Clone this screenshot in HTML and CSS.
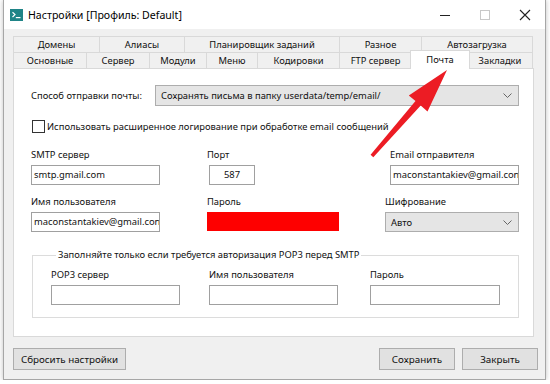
FILE: index.html
```html
<!DOCTYPE html>
<html lang="ru">
<head>
    <meta charset="UTF-8">
    <meta name="viewport" content="width=device-width, initial-scale=1.0">
    <title>Настройки</title>
    <link rel="stylesheet" href="styles.css">
</head>
<body>
    <div class="window">
        <div class="titlebar">
            <svg class="app-icon" width="13" height="12" viewBox="0 0 13 12">
                <rect width="13" height="12" fill="#1f8487"/>
                <path d="M2.5 3.2 L5 5.6 L2.5 8" stroke="#fff" stroke-width="1.2" fill="none"/>
                <path d="M5.8 8.6 H10.5" stroke="#fff" stroke-width="1.2"/>
            </svg>
            <span class="title">Настройки [Профиль: Default]</span>
            <div class="controls">
                <div class="ctl">
                    <svg width="12" height="12" viewBox="0 0 12 12"><path d="M1 6.5 H11" stroke="#222" stroke-width="1"/></svg>
                </div>
                <div class="ctl">
                    <svg width="12" height="12" viewBox="0 0 12 12"><rect x="1.5" y="1.5" width="9" height="9" fill="none" stroke="#c8c8c8" stroke-width="1"/></svg>
                </div>
                <div class="ctl">
                    <svg width="12" height="12" viewBox="0 0 12 12"><path d="M1 1 L11 11 M11 1 L1 11" stroke="#222" stroke-width="1.1"/></svg>
                </div>
            </div>
        </div>

        <div class="content">
            <div class="tabs">
                <div class="tab-row row-back">
                    <div class="tab">Домены</div>
                    <div class="tab">Алиасы</div>
                    <div class="tab">Планировщик заданий</div>
                    <div class="tab">Разное</div>
                    <div class="tab">Автозагрузка</div>
                </div>
                <div class="tab-row row-front">
                    <div class="tab">Основные</div>
                    <div class="tab">Сервер</div>
                    <div class="tab">Модули</div>
                    <div class="tab">Меню</div>
                    <div class="tab">Кодировки</div>
                    <div class="tab">FTP сервер</div>
                    <div class="tab active">Почта</div>
                    <div class="tab">Закладки</div>
                </div>
            </div>

            <div class="panel">
                <div class="send-row">
                    <span>Способ отправки почты:</span>
                    <div class="select select-wide">
                        <span>Сохранять письма в папку userdata/temp/email/</span>
                        <svg class="chevron" width="9" height="5" viewBox="0 0 9 5"><path d="M0.5 0.5 L4.5 4.5 L8.5 0.5" stroke="#666" fill="none"/></svg>
                    </div>
                </div>

                <div class="check-row">
                    <span class="checkbox"></span>
                    <span>Использовать расширенное логирование при обработке email сообщений</span>
                </div>

                <div class="fields">
                    <div class="field w-129">
                        <div class="label">SMTP сервер</div>
                        <div class="input">smtp.gmail.com</div>
                    </div>
                    <div class="field f-port">
                        <div class="label">Порт</div>
                        <div class="input port">587</div>
                    </div>
                    <div class="field f-right w-129">
                        <div class="label">Email отправителя</div>
                        <div class="input">maconstantakiev@gmail.con</div>
                    </div>
                </div>

                <div class="fields second">
                    <div class="field w-129">
                        <div class="label">Имя пользователя</div>
                        <div class="input">maconstantakiev@gmail.con</div>
                    </div>
                    <div class="field f-pass">
                        <div class="label">Пароль</div>
                        <div class="redact"></div>
                    </div>
                    <div class="field f-right f-enc">
                        <div class="label">Шифрование</div>
                        <div class="select">
                            <span>Авто</span>
                            <svg class="chevron" width="9" height="5" viewBox="0 0 9 5"><path d="M0.5 0.5 L4.5 4.5 L8.5 0.5" stroke="#666" fill="none"/></svg>
                        </div>
                    </div>
                </div>

                <fieldset class="group">
                    <legend>Заполняйте только если требуется авторизация POP3 перед SMTP</legend>
                    <div class="group-fields">
                        <div class="field w-129">
                            <div class="label">POP3 сервер</div>
                            <div class="input"></div>
                        </div>
                        <div class="field w-129">
                            <div class="label">Имя пользователя</div>
                            <div class="input"></div>
                        </div>
                        <div class="field w-130">
                            <div class="label">Пароль</div>
                            <div class="input"></div>
                        </div>
                    </div>
                </fieldset>
            </div>

            <div class="footer">
                <button class="btn btn-reset">Сбросить настройки</button>
                <div class="footer-right">
                    <button class="btn btn-save">Сохранить</button>
                    <button class="btn btn-close">Закрыть</button>
                </div>
            </div>
        </div>
    </div>

    <!-- red pointer drawn over the dialog -->
    <svg class="arrow" width="550" height="384" viewBox="0 0 550 384">
        <polygon points="447,70 427.5,111.5 420.7,105.5 373.3,157.2 370.6,154.8 415.5,100.9 408.8,95.5" fill="#ec1c24"/>
    </svg>
</body>
</html>
```

FILE: styles.css
```css
body {
    margin: 0;
    background: #ffffff;
    font-family: "Noto Sans", sans-serif;
    font-size: 9.4px;
    color: #111;
}
.window {
    margin-left: 3px;
    width: 541px;
    height: 379px;
    border: 1px solid #a6a6a6;
    border-top: none;
    background: #f0f0f0;
    box-shadow: 0 0 5px rgba(0, 0, 0, 0.25);
}
.titlebar {
    height: 29px;
    background: #ffffff;
    display: flex;
    align-items: center;
}
.app-icon {
    margin-left: 6px;
}
.title {
    margin-left: 5px;
    font-size: 10.6px;
    color: #000;
}
.controls {
    margin-left: auto;
    display: flex;
    height: 100%;
}
.ctl {
    width: 40px;
    display: flex;
    align-items: center;
    justify-content: center;
}
.content {
    padding: 7px 0 0 9px;
}
.tab-row {
    display: grid;
    height: 16px;
    width: 520px;
}
.row-back {
    grid-template-columns: 87px 85px 155px 82px 111px;
}
.row-front {
    grid-template-columns: 74px 63px 57px 51px 82px 72px 56px 65px;
}
.tab {
    border: 1px solid #d9d9d9;
    border-bottom: none;
    margin-left: -1px;
    background: #f0f0f0;
    text-align: center;
    line-height: 15px;
    white-space: nowrap;
}
.tab:first-child {
    margin-left: 0;
}
.tab.active {
    position: relative;
    z-index: 1;
    background: #ffffff;
    margin: -2px -2px -1px -2px;
    line-height: 17px;
}
.panel {
    width: 521px;
    height: 269px;
    box-sizing: border-box;
    background: #ffffff;
    border: 1px solid #d9d9d9;
    padding: 0 14px 0 17px;
}
.send-row {
    display: flex;
    align-items: center;
    margin-top: 16px;
}
.select {
    height: 20px;
    box-sizing: border-box;
    background: #e5e5e5;
    border: 1px solid #adadad;
    padding-left: 5px;
    display: flex;
    align-items: center;
}
.select-wide {
    margin-left: auto;
    width: 364px;
    height: 21px;
}
.chevron {
    margin-left: auto;
    margin-right: 6px;
}
.check-row {
    display: flex;
    align-items: center;
    margin-top: 14px;
    height: 13px;
}
.checkbox {
    width: 13px;
    height: 13px;
    box-sizing: border-box;
    border: 1px solid #333;
    background: #fff;
    margin-left: 1px;
    margin-right: 2px;
}
.fields {
    display: flex;
    margin-top: 14px;
}
.fields.second {
    margin-top: 9px;
}
.label {
    line-height: 16px;
    margin-bottom: 2px;
    white-space: nowrap;
}
.input {
    height: 20px;
    box-sizing: border-box;
    border: 1px solid #a0a0a0;
    background: #fff;
    padding: 0 2px;
    line-height: 18px;
    white-space: nowrap;
    overflow: hidden;
}
.input.port {
    text-align: center;
}
.w-129 {
    width: 129px;
}
.w-130 {
    width: 130px;
}
.f-port {
    width: 47px;
    margin-left: 47px;
}
.f-port .input {
    margin-left: 2px;
    width: 46px;
}
.f-pass {
    width: 132px;
    margin-left: 47px;
}
.f-right {
    margin-left: auto;
}
.f-enc {
    width: 134px;
}
.redact {
    height: 19px;
    margin-top: 1px;
    background: #fe0000;
}
.group {
    margin: 15px 1px 0 1px;
    padding: 4px 18px 12px 18px;
    border: 1px solid #dcdcdc;
}
.group legend {
    padding: 0 2px;
    margin-left: 5px;
    line-height: 16px;
}
.group-fields {
    display: flex;
    gap: 29px;
}
.group-fields .field:last-child {
    margin-left: 3px;
}
.footer {
    display: flex;
    padding: 11px 7px 0 0;
}
.footer-right {
    margin-left: auto;
    display: flex;
    gap: 7px;
}
.btn {
    height: 22px;
    background: #e1e1e1;
    border: 1px solid #adadad;
    font-family: "Noto Sans", sans-serif;
    font-size: 9.8px;
    color: #111;
    padding: 0;
}
.btn-reset {
    width: 113px;
}
.btn-save {
    width: 76px;
}
.btn-close {
    width: 76px;
}
.arrow {
    position: absolute;
    left: 0;
    top: 0;
    pointer-events: none;
}
```
